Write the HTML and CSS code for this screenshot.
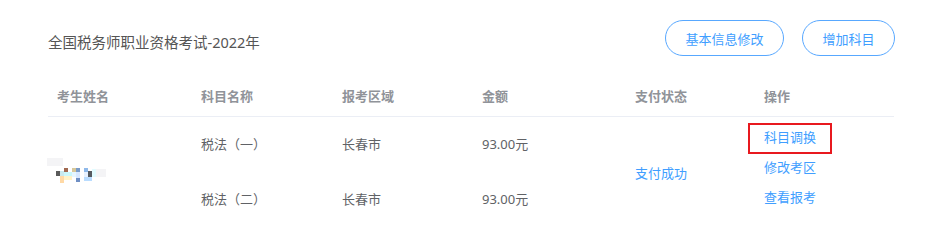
FILE: index.html
```html
<!DOCTYPE html>
<html lang="zh-CN">
<head>
<meta charset="utf-8">
<title>报考信息</title>
<link rel="stylesheet" href="styles.css">
</head>
<body>
<div class="panel">
  <div class="top">
    <div class="title">全国税务师职业资格考试-2022年</div>
    <div class="actions">
      <button class="btn btn-wide">基本信息修改</button>
      <button class="btn btn-narrow">增加科目</button>
    </div>
  </div>
  <div class="table">
    <div class="row head">
      <div class="c c1">考生姓名</div>
      <div class="c c2">科目名称</div>
      <div class="c c3">报考区域</div>
      <div class="c c4">金额</div>
      <div class="c c5">支付状态</div>
      <div class="c c6">操作</div>
    </div>
    <div class="row body">
      <div class="c c1 mid">
        <svg class="mosaic" width="62" height="30" viewBox="0 0 62 30">
          <rect x="1" y="0" width="16" height="8" fill="#f4f4f6"/>
          <rect x="10" y="13" width="4" height="5" fill="#5a5a5a"/>
          <rect x="14" y="18" width="4" height="7" fill="#ffd9a6"/>
          <rect x="14" y="13" width="4" height="5" fill="#c9e9ee"/>
          <rect x="18" y="10" width="4" height="4" fill="#a06850"/>
          <rect x="18" y="14" width="8" height="5" fill="#c9f7fb"/>
          <rect x="18" y="18" width="8" height="4" fill="#fff2c8"/>
          <rect x="26" y="10" width="4" height="4" fill="#d8c89a"/>
          <rect x="26" y="14" width="4" height="5" fill="#e6f6ff"/>
          <rect x="30" y="10" width="4" height="4" fill="#7a9cc8"/>
          <rect x="30" y="14" width="4" height="6" fill="#d8e8ff"/>
          <rect x="30" y="20" width="4" height="4" fill="#6f8fc4"/>
          <rect x="38" y="10" width="4" height="4" fill="#8fb9ea"/>
          <rect x="38" y="14" width="4" height="5" fill="#e8f2ff"/>
          <rect x="42" y="13" width="4" height="7" fill="#555a60"/>
          <rect x="38" y="19" width="8" height="4" fill="#b9dcff"/>
          <rect x="46" y="11" width="4" height="8" fill="#e2fbff"/>
          <rect x="50" y="11" width="10" height="8" fill="#f4f4f6"/>
        </svg>
      </div>
      <div class="c c2 split"><div class="sub">税法（一）</div><div class="sub">税法（二）</div></div>
      <div class="c c3 split"><div class="sub">长春市</div><div class="sub">长春市</div></div>
      <div class="c c4 split"><div class="sub">93.00元</div><div class="sub">93.00元</div></div>
      <div class="c c5 mid"><span class="link">支付成功</span></div>
      <div class="c c6 ops">
        <span class="link op marked">科目调换</span>
        <span class="link op">修改考区</span>
        <span class="link op">查看报考</span>
      </div>
    </div>
  </div>
</div>
</body>
</html>
```

FILE: styles.css
```css
html, body {
  margin: 0;
  padding: 0;
  background: #ffffff;
}
body {
  font-family: "Noto Sans", "Noto Sans CJK SC", sans-serif;
  font-size: 13px;
  color: #606266;
}
.panel {
  width: 846px;
  margin-left: 48px;
}
.top {
  display: flex;
  justify-content: space-between;
  align-items: flex-start;
  padding-top: 20px;
  height: 56px;
}
.title {
  margin-top: 11px;
  line-height: 22px;
  font-size: 14.5px;
  color: #555555;
}
.actions {
  display: flex;
  gap: 18px;
  margin-right: -1px;
}
.btn {
  height: 36px;
  border: 1px solid #58a8ff;
  border-radius: 18px;
  background: #ffffff;
  color: #409eff;
  font-family: "Noto Sans CJK SC", sans-serif;
  font-size: 13px;
  padding: 0;
  cursor: pointer;
}
.btn-wide { width: 119px; }
.btn-narrow { width: 93px; }
.table {
  width: 846px;
}
.row {
  display: flex;
}
.head {
  height: 40px;
  border-bottom: 1px solid #ebeef5;
  align-items: center;
  font-weight: bold;
  color: #909399;
  line-height: 20px;
}
.c { padding-left: 9px; box-sizing: border-box; }
.c1 { width: 144px; }
.c2 { width: 141px; }
.c3 { width: 140px; }
.c4 { width: 153px; }
.c5 { width: 129px; }
.c6 { flex: 1; }
.body {
  height: 110px;
}
.mid {
  display: flex;
  align-items: center;
}
.mosaic {
  display: block;
  margin-left: -11px;
  margin-top: 2px;
}
.split {
  display: flex;
  flex-direction: column;
}
.sub {
  line-height: 55px;
}
.link {
  color: #409eff;
}
.ops {
  display: flex;
  flex-direction: column;
  align-items: flex-start;
  padding-top: 5px;
}
.op {
  line-height: 30px;
  position: relative;
}
.marked::after {
  content: "";
  position: absolute;
  left: -16px;
  top: 1px;
  width: 84px;
  height: 31px;
  box-sizing: border-box;
  border: 2px solid #e8191f;
}
```
